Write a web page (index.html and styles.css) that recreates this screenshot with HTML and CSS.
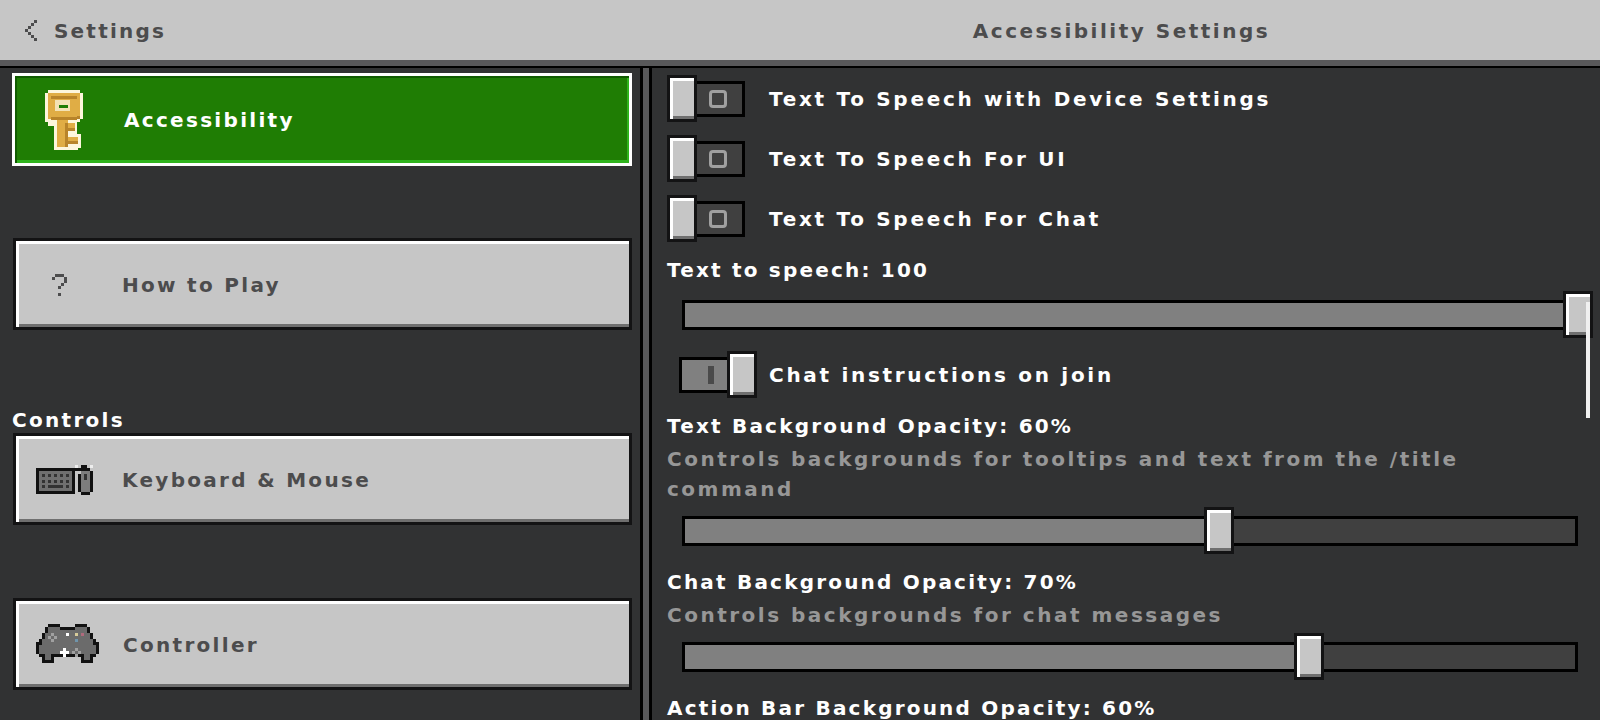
FILE: index.html
```html
<!DOCTYPE html>
<html lang="en">
<head>
    <meta charset="UTF-8">
    <title>Accessibility Settings</title>
    <link rel="stylesheet" href="styles.css">
</head>
<body>

    <!-- Top bar -->
    <header class="topBar">
        <div class="backArea">
            <svg class="backIcon" width="12" height="21" viewBox="0 0 12 21" shape-rendering="crispEdges">
                <path fill="#4c4c4d" d="M9 0h3v3H9zM6 3h3v3H6zM3 6h3v3H3zM0 9h3v3H0zM3 12h3v3H3zM6 15h3v3H6zM9 18h3v3H9z"/>
            </svg>
            <span>Settings</span>
        </div>
        <div class="pageTitle">Accessibility Settings</div>
    </header>

    <main class="columns">

        <!-- Left menu -->
        <nav class="sideMenu">
            <div class="menuButton active">
                <svg class="menuIcon keyIcon" width="39" height="60" viewBox="0 0 39 60" shape-rendering="crispEdges">
                    <path fill="#fdf6dc" d="M3 0h32v3h3v26h-3v3h-3v12h4v14h-3v2H9V36H3v-4H0V3h3z"/>
                    <path fill="#e0ad45" d="M3 3h32v26h-3v1H6v-1H3z"/>
                    <path fill="#b8842a" d="M6 6h26v3H6zM32 26h3v3h-3zM6 27h26v3H6z"/>
                    <path fill="#e0ad45" d="M12 30h11v27H12zM23 33h7v8h-7zM23 47h10v7H23z"/>
                    <path fill="#b8842a" d="M20 33h3v24h-3zM23 38h7v3h-7zM23 51h10v3H23z"/>
                    <path fill="#f3e2b5" d="M10 10h15v11H10z"/>
                    <path fill="#1f7d04" d="M14 15h9v3h-9z"/>
                </svg>
                <span>Accessibility</span>
            </div>

            <div class="menuButton spaced">
                <svg class="menuIcon helpIcon" width="15" height="22" viewBox="0 0 15 22" shape-rendering="crispEdges">
                    <path fill="#4c4c4d" d="M3 0h9v3H3zM0 3h3v3H0zM12 3h3v6h-3zM9 9h3v3H9zM6 12h3v3H6zM6 19h3v3H6z"/>
                </svg>
                <span>How to Play</span>
            </div>

            <div class="menuLabel">Controls</div>

            <div class="menuButton spaced">
                <svg class="menuIcon" width="58" height="30" viewBox="0 0 58 30" shape-rendering="crispEdges">
                    <path fill="#111" d="M0 3h39v26H0z"/>
                    <path fill="#6f6f6f" d="M3 6h33v20H3z"/>
                    <path fill="#333" d="M6 9h3v3H6zM12 9h3v3h-3zM18 9h3v3h-3zM24 9h3v3h-3zM30 9h3v3h-3zM6 15h3v3H6zM12 15h3v3h-3zM18 15h3v3h-3zM24 15h3v3h-3zM30 15h3v3h-3zM6 20h3v3H6zM12 20h15v3H12zM30 20h3v3h-3z"/>
                    <path fill="#111" d="M39 3h6v-3h6v3h3v3h3v21h-3v3H45v-3h-3V9h3V6h-6z"/>
                    <path fill="#eee" d="M39 0h3v3h-3zM54 0h3v3h-3z"/>
                    <path fill="#7d7d7d" d="M45 6h9v21h-9z"/>
                    <path fill="#333" d="M48 9h3v6h-3z"/>
                </svg>
                <span>Keyboard &amp; Mouse</span>
            </div>

            <div class="menuButton">
                <svg class="menuIcon padIcon" width="63" height="42" viewBox="0 0 21 14" shape-rendering="crispEdges">
                    <path fill="#111" d="M4 0h4v1h5V0h4v1h1v2h1v2h1v1h1v4h-1v1h-1v2h-4v-2H6v2H2v-2H1v-1H0V6h1V5h1V3h1V1h1z"/>
                    <path fill="#6b6b6b" d="M4 1h4v1h5V1h4v2h1v2h1v2h1v3h-2v2h-2v-2H5v2H3v-2H1V7h1V5h1V3h1z"/>
                    <path fill="#a0a0a0" d="M5 3h1v1H5zM6 4h1v1H6zM5 5h1v1H5zM4 4h1v1H4zM13 8h1v1h-1zM12 9h1v1h-1zM14 9h1v1h-1zM13 10h1v1h-1z"/>
                    <path fill="#fff" d="M9 8h1v1H9zM8 9h3v1H8zM9 10h1v1H9zM10 3h1v1h-1z"/>
                    <path fill="#d8cc9a" d="M13 3h1v1h-1z"/>
                    <path fill="#b06a7c" d="M15 3h1v1h-1z"/>
                    <path fill="#6f94ab" d="M13 5h1v1h-1z"/>
                </svg>
                <span>Controller</span>
            </div>
        </nav>

        <div class="divider"></div>

        <!-- Right panel with the settings list -->
        <section class="settingsPanel">
            <div class="toggleRow">
                <div class="toggle">
                    <div class="knob"></div>
                    <div class="track"><div class="offMark"></div></div>
                </div>
                <span>Text To Speech with Device Settings</span>
            </div>
            <div class="toggleRow">
                <div class="toggle">
                    <div class="knob"></div>
                    <div class="track"><div class="offMark"></div></div>
                </div>
                <span>Text To Speech For UI</span>
            </div>
            <div class="toggleRow">
                <div class="toggle">
                    <div class="knob"></div>
                    <div class="track"><div class="offMark"></div></div>
                </div>
                <span>Text To Speech For Chat</span>
            </div>

            <div class="setting">
                <div class="label">Text to speech: 100</div>
                <div class="slider">
                    <div class="fill" style="width: 881px"></div>
                    <div class="knob"></div>
                </div>
            </div>

            <div class="toggleRow">
                <div class="toggle on">
                    <div class="track"><div class="onMark"></div></div>
                    <div class="knob"></div>
                </div>
                <span>Chat instructions on join</span>
            </div>

            <div class="setting">
                <div class="label">Text Background Opacity: 60%</div>
                <div class="desc">Controls backgrounds for tooltips and text from the /title command</div>
                <div class="slider">
                    <div class="fill" style="width: 522px"></div>
                    <div class="knob"></div>
                    <div class="rest"></div>
                </div>
            </div>

            <div class="setting">
                <div class="label">Chat Background Opacity: 70%</div>
                <div class="desc">Controls backgrounds for chat messages</div>
                <div class="slider">
                    <div class="fill" style="width: 612px"></div>
                    <div class="knob"></div>
                    <div class="rest"></div>
                </div>
            </div>

            <div class="setting">
                <div class="label">Action Bar Background Opacity: 60%</div>
            </div>

            <div class="scrollThumb"></div>
        </section>
    </main>

</body>
</html>
```

FILE: styles.css
```css
/* Basic styling */
html, body {
    height: 100%;
}
body {
    margin: 0;
    display: flex;
    flex-direction: column;
    overflow: hidden;
    background-color: #313233;
    color: #fff;
    font-family: "DejaVu Sans", sans-serif;
    font-weight: bold;
    font-size: 20px;
    letter-spacing: 2.7px;
}
* {
    box-sizing: border-box;
}

/* Top bar */
.topBar {
    flex: none;
    display: flex;
    align-items: center;
    height: 68px;
    padding-bottom: 5px;
    background-color: #c6c6c6;
    border-bottom: 2px solid #000;
    box-shadow: inset 0 -6px 0 #58585a;
    color: #4c4c4d;
}
.backArea {
    flex: none;
    width: 652px;
    display: flex;
    align-items: center;
    padding-left: 25px;
    letter-spacing: 2.2px;
}
.backIcon {
    margin-right: 17px;
}
.pageTitle {
    flex: 1;
    padding-right: 9px;
    text-align: center;
    letter-spacing: 2.5px;
}

/* Two columns */
.columns {
    flex: 1;
    display: flex;
    min-height: 0;
}
.sideMenu {
    flex: none;
    width: 640px;
    padding: 5px 8px 0 12px;
    letter-spacing: 2.3px;
}
.divider {
    flex: none;
    width: 12px;
    background-color: #58585a;
    border-left: 3px solid #000;
    border-right: 3px solid #000;
}

/* Left menu buttons */
.menuButton {
    display: flex;
    align-items: center;
    height: 92px;
    margin-left: 1px;
    padding-left: 20px;
    padding-top: 2px;
    border: 3px solid #131314;
    background-color: #c6c6c6;
    box-shadow: inset 3px 3px 0 #fff, inset 0 -3px 0 #6f6f6f;
    color: #4c4c4d;
}
.menuButton.active {
    height: 93px;
    margin-left: 0;
    padding-left: 30px;
    padding-top: 0;
    margin-bottom: 72px;
    border-color: #fff;
    background-color: #1f7d04;
    box-shadow: inset 2px 2px 0 #105b00, inset -2px 0 0 #2fb41d, inset 0 -3px 0 #2fb41d;
    color: #fff;
}
.menuButton.spaced {
    margin-bottom: 73px;
}
.menuIcon {
    flex: none;
    margin-right: 28px;
}
.keyIcon {
    margin-right: 40px;
}
.helpIcon {
    margin-left: 16px;
    margin-right: 55px;
}
.padIcon {
    margin-right: 24px;
}
.menuLabel {
    height: 30px;
    padding-top: 2px;
    line-height: 30px;
}

/* Settings list */
.settingsPanel {
    position: relative;
    flex: 1;
    min-width: 0;
    padding: 7px 0 0 15px;
}
.toggleRow {
    display: flex;
    align-items: center;
    height: 47px;
    margin-bottom: 13px;
}
.toggle {
    display: flex;
    align-items: center;
    width: 90px;
    margin-right: 12px;
}
.toggle.on {
    justify-content: flex-end;
}
.knob {
    flex: none;
    width: 30px;
    height: 47px;
    border: 3px solid #131314;
    background-color: #c6c6c6;
    box-shadow: inset 3px 3px 0 #fff, inset 0 -3px 0 #6f6f6f;
}
.track {
    display: flex;
    align-items: center;
    justify-content: center;
    width: 48px;
    height: 36px;
    padding-right: 3px;
    border: 3px solid #000;
    border-left: none;
    background-color: #404040;
}
.on .track {
    padding-right: 0;
    padding-left: 12px;
    border-left: 3px solid #000;
    border-right: none;
    background-color: #808080;
}
.offMark {
    width: 18px;
    height: 18px;
    border: 3px solid #a0a0a0;
    border-radius: 4px;
}
.onMark {
    width: 6px;
    height: 18px;
    background-color: #4a4a4a;
}

/* Sliders and their labels */
.setting {
    margin-bottom: 13px;
}
.label, .desc {
    line-height: 30px;
    padding-right: 130px;
}
.label {
    letter-spacing: 2.2px;
}
.desc {
    margin-top: 3px;
    color: #979797;
    letter-spacing: 2.5px;
}
.slider {
    display: flex;
    align-items: center;
    margin-left: 15px;
    margin-right: 22px;
}
.label + .slider {
    margin-top: 6px;
}
.desc + .slider {
    margin-top: 3px;
}
.fill {
    flex: none;
    height: 30px;
    border: 3px solid #000;
    border-right: none;
    background-color: #808080;
}
.rest {
    flex: 1;
    height: 30px;
    border: 3px solid #000;
    border-left: none;
    background-color: #404040;
}
.scrollThumb {
    position: absolute;
    top: 234px;
    right: 10px;
    width: 4px;
    height: 116px;
    background-color: #f0f0f0;
}
```
